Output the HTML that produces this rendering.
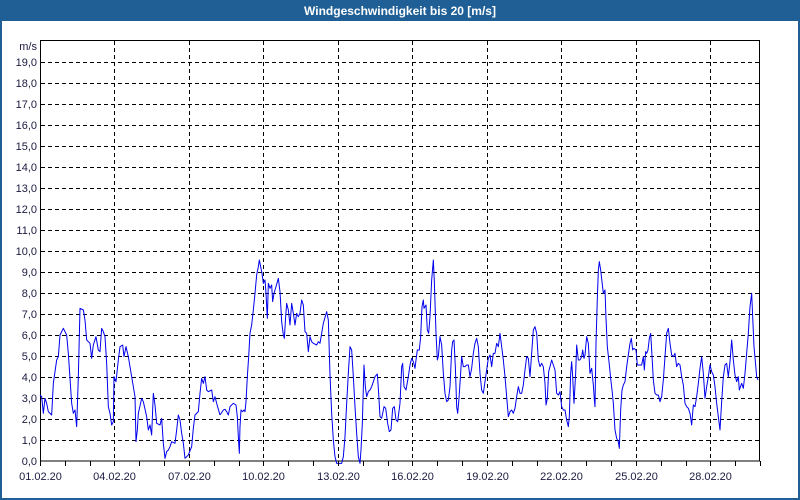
<!DOCTYPE html>
<html><head><meta charset="utf-8"><style>
html,body{margin:0;padding:0;width:800px;height:500px;overflow:hidden;background:#fff}
</style></head><body>
<svg width="800" height="500" xmlns="http://www.w3.org/2000/svg" font-family="Liberation Sans, sans-serif">
<rect x="0" y="0" width="800" height="500" fill="#1f5f96"/>
<rect x="2" y="21" width="796" height="477" fill="#fff"/>
<text x="400" y="15" fill="#fff" font-size="12" font-weight="bold" text-anchor="middle">Windgeschwindigkeit bis 20 [m/s]</text>
<g id="grid" stroke="#000" stroke-width="1" stroke-dasharray="4,3" fill="none"></g>
<g id="labels" fill="#1a1a40" font-size="11"></g>
<rect x="40.5" y="40.5" width="719" height="420.5" fill="none" stroke="#000"/>
<g fill="none" stroke="#0000ee" stroke-width="3" stroke-linejoin="round">
<polyline transform="translate(40,250) scale(0.33333)" points="0,435 5,440 10,490 15,445 20,460 25,485 35,495 40,400 50,330 55,320 60,255 70,235 80,255 85,310 95,460 100,490 105,480 110,530 115,380 120,175 130,180 135,210 140,270 150,280 155,325 160,285 168,260 175,300 180,305 185,235 190,245 195,260 200,340 205,470 210,490 215,525 220,515 222,380 228,395 235,330 240,290 248,285 252,320 258,290 265,320 275,380 285,440 288,575 292,540 295,490 305,445 310,455 320,500 325,540 330,525 335,555 340,430 345,465 350,520 360,525 365,505 370,580 375,625 380,605 385,600 390,590 395,575 405,580 410,540 415,495 420,510 425,550 430,580 435,625 445,615 455,590 460,535 465,495 475,485 480,430 485,385 490,400 495,380 500,420 505,425 515,420 520,455 525,440 530,460 540,495"/>
<polyline transform="translate(220,250) scale(0.33333)" points="0,495 10,480 15,478 20,485 25,495 30,470 40,460 48,465 52,500 55,560 58,610 60,530 63,480 68,485 72,480 75,485 78,455 82,380 86,320 90,250 95,225 100,180 105,130 110,75 115,50 118,30 122,50 126,70 130,100 135,90 138,130 142,205 145,100 150,115 155,105 158,155 162,130 168,110 175,85 180,125 185,215 190,255 193,265 197,200 200,160 205,180 210,225 215,160 220,190 225,225 230,190 235,200 240,190 245,150 250,165 255,245 260,250 265,305 270,260 275,275 280,280 290,285 295,275 300,280 305,250 310,220 320,185 325,210 330,375 335,490 340,570 345,620 350,640 365,640 370,620 375,560 380,460 385,370 390,290 395,300 400,380 405,470 410,550 415,620 420,640 423,600 427,520 432,345 436,410 440,440 445,425 450,420 455,410 465,380 472,372 476,430 480,500 485,505 492,470 497,475 503,520 508,545 513,540 518,475 523,470 528,510 533,515 540,460"/>
<polyline transform="translate(400,250) scale(0.33333)" points="0,460 5,350 8,340 12,410 18,420 25,380 30,345 35,325 40,335 45,355 48,330 52,300 58,300 62,260 66,170 70,150 72,175 78,165 82,240 86,250 90,200 95,90 100,30 103,95 108,250 112,330 115,320 120,260 125,285 130,370 135,430 140,455 145,450 150,410 155,300 158,275 162,270 166,350 170,470 173,490 177,445 180,400 185,320 190,350 195,350 200,345 205,345 210,380 215,355 220,310 225,280 230,265 235,290 240,370 245,420 250,430 255,395 260,360 265,325 270,315 275,350 280,310 285,310 290,280 295,290 300,250 305,290 310,330 315,380 320,440 325,500 330,485 335,480 340,490 345,475 350,440 355,410 360,430 365,430 370,405 375,360 380,320 385,325 390,380 395,310 400,240 405,230 410,250 415,330 420,350 425,340 430,350 435,400 438,465 442,445 446,365 450,350 455,330 460,345 465,360 470,430 475,435 480,425 485,470 490,480 495,480 500,510 505,530 508,500 512,370 515,335 518,380 522,460 527,370 530,285 535,330 540,330"/>
<polyline transform="translate(580,250) scale(0.33333)" points="0,330 5,320 8,300 12,325 15,315 20,260 25,280 30,370 35,355 40,405 43,450 45,470 48,280 52,145 55,60 58,35 62,60 66,95 70,130 75,120 78,205 82,290 88,345 92,385 96,420 100,460 105,540 110,565 115,575 118,595 122,480 126,420 130,405 135,395 140,350 145,315 150,280 154,265 158,300 162,295 168,300 172,345 178,345 185,345 190,320 193,360 197,305 200,310 204,300 208,265 212,250 215,300 220,390 225,430 230,435 235,435 240,455 245,440 250,390 255,320 260,250 265,235 270,280 275,315 280,320 285,310 290,350 295,340 300,345 305,380 310,405 315,460 320,470 325,475 330,490 335,525 340,465 345,470 350,440 355,400 360,355 365,320 370,370 375,445 380,410 385,380 390,345 395,365 400,375 405,410 410,460 415,500 420,540 425,455 430,380 435,345 440,340 445,380 450,335 455,270 460,330 465,375 470,395 475,380 478,420 485,400 490,415 495,370 500,310 505,250 510,170 515,130 518,200 522,290 527,345 530,380 534,390"/>
</g>
<g id="ticks" stroke="#000"></g>
</svg>
<script>
var ns="http://www.w3.org/2000/svg";
var g=document.getElementById('grid'),L=document.getElementById('labels'),T=document.getElementById('ticks');
function el(p,t,a){var e=document.createElementNS(ns,t);for(var k in a)e.setAttribute(k,a[k]);p.appendChild(e);return e;}
for(var v=0;v<=19;v++){var y=461-21*v;
 if(v>0)el(g,'line',{x1:41,x2:760,y1:y+.5,y2:y+.5});
 var t=el(L,'text',{x:37,y:y+4,'text-anchor':'end'});t.textContent=v.toFixed(1).replace('.',',');}
var m=el(L,'text',{x:37,y:50,'text-anchor':'end'});m.textContent='m/s';
for(var k=0;k<=29;k++){var x=Math.round(40+24.83*k)+.5;
 if(k%3==0&&k>0&&k<29)el(g,'line',{x1:x,x2:x,y1:41,y2:461});
 el(T,'line',{x1:x,x2:x,y1:461,y2:466});
 if(k%3==0&&k<=27){var d=(k+1<10?'0':'')+(k+1);var t2=el(L,'text',{x:x,y:480,'text-anchor':'middle'});t2.textContent=d+'.02.20';}}
</script>
</body></html>
